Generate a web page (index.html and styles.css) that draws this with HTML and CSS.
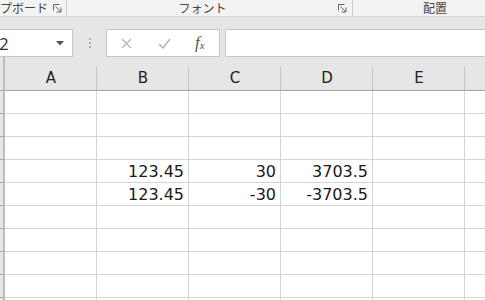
FILE: index.html
```html
<!DOCTYPE html>
<html lang="ja">
<head>
    <meta charset="UTF-8">
    <meta name="viewport" content="width=device-width, initial-scale=1.0">
    <title>Sheet</title>
    <link rel="stylesheet" href="styles.css">
</head>
<body>
    <!-- リボンのグループ名 -->
    <div class="ribbon">
        <div class="group g-clip">
            <span class="label">プボード</span>
            <svg class="launcher" width="9" height="9" viewBox="0 0 9 9"><path d="M0.5 6.5V0.5h6" fill="none" stroke="#666"/><path d="M2.5 2.5l5 5M8 3.5v4.5H3.5" fill="none" stroke="#666"/></svg>
        </div>
        <div class="group g-font">
            <span class="label">フォント</span>
            <svg class="launcher" width="9" height="9" viewBox="0 0 9 9"><path d="M0.5 6.5V0.5h6" fill="none" stroke="#666"/><path d="M2.5 2.5l5 5M8 3.5v4.5H3.5" fill="none" stroke="#666"/></svg>
        </div>
        <div class="group g-align">
            <span class="label">配置</span>
        </div>
    </div>

    <!-- 数式バー -->
    <div class="formula-bar">
        <div class="name-box">
            <span class="cell-ref">2</span>
            <svg width="8" height="5" viewBox="0 0 8 5"><path d="M0 0h8L4 4.5z" fill="#555"/></svg>
        </div>
        <div class="dots"><span></span><span></span><span></span></div>
        <div class="fx-buttons">
            <svg class="btn-cancel" width="11" height="11" viewBox="0 0 11 11"><path d="M1 1l9 9M10 1l-9 9" stroke="#b4b4b4" stroke-width="1.3"/></svg>
            <svg class="btn-ok" width="13" height="11" viewBox="0 0 13 11"><path d="M1 6l4 4 7-9" fill="none" stroke="#b4b4b4" stroke-width="1.5"/></svg>
            <span class="fx"><i>f</i><sub>x</sub></span>
        </div>
        <div class="formula-input"></div>
    </div>

    <!-- シート -->
    <div class="sheet">
        <div class="corner"></div>
        <div class="col-head">A</div>
        <div class="col-head">B</div>
        <div class="col-head">C</div>
        <div class="col-head">D</div>
        <div class="col-head">E</div>
        <div class="col-head"></div>

        <div class="row-head"></div><div class="cell"></div><div class="cell"></div><div class="cell"></div><div class="cell"></div><div class="cell"></div><div class="cell"></div>
        <div class="row-head"></div><div class="cell"></div><div class="cell"></div><div class="cell"></div><div class="cell"></div><div class="cell"></div><div class="cell"></div>
        <div class="row-head"></div><div class="cell"></div><div class="cell"></div><div class="cell"></div><div class="cell"></div><div class="cell"></div><div class="cell"></div>
        <div class="row-head"></div><div class="cell"></div><div class="cell num">123.45</div><div class="cell num">30</div><div class="cell num">3703.5</div><div class="cell"></div><div class="cell"></div>
        <div class="row-head"></div><div class="cell"></div><div class="cell num">123.45</div><div class="cell num">-30</div><div class="cell num">-3703.5</div><div class="cell"></div><div class="cell"></div>
        <div class="row-head"></div><div class="cell"></div><div class="cell"></div><div class="cell"></div><div class="cell"></div><div class="cell"></div><div class="cell"></div>
        <div class="row-head"></div><div class="cell"></div><div class="cell"></div><div class="cell"></div><div class="cell"></div><div class="cell"></div><div class="cell"></div>
        <div class="row-head"></div><div class="cell"></div><div class="cell"></div><div class="cell"></div><div class="cell"></div><div class="cell"></div><div class="cell"></div>
        <div class="row-head"></div><div class="cell"></div><div class="cell"></div><div class="cell"></div><div class="cell"></div><div class="cell"></div><div class="cell"></div>
        <div class="row-head"></div><div class="cell"></div><div class="cell"></div><div class="cell"></div><div class="cell"></div><div class="cell"></div><div class="cell"></div>
    </div>
</body>
</html>
```

FILE: styles.css
```css
body {
    margin: 0;
    width: 485px;
    height: 300px;
    overflow: hidden;
    background: #fff;
    font-family: "DejaVu Sans", "Noto Sans CJK JP", sans-serif;
}
.ribbon {
    display: flex;
    height: 16px;
    background: #f3f3f3;
    border-bottom: 1px solid #d5d5d5;
}
.group {
    display: flex;
    align-items: center;
    box-sizing: border-box;
    border-right: 1px solid #cbcbcb;
}
.label {
    font-family: "Noto Sans CJK JP", sans-serif;
    font-size: 12px;
    line-height: 14px;
    color: #444;
    white-space: nowrap;
}
.g-clip {
    width: 67px;
    justify-content: space-between;
    padding-right: 4px;
}
.g-font {
    width: 286px;
    padding-right: 5px;
}
.g-font .label {
    flex: 1;
    text-align: center;
}
.g-align {
    flex: 1;
    border-right: none;
    padding-left: 70px;
}
.launcher {
    display: block;
}

.formula-bar {
    display: flex;
    align-items: stretch;
    height: 28px;
    padding-top: 12px;
    background: #e6e6e6;
}
.name-box {
    box-sizing: border-box;
    width: 74px;
    margin-left: -1px;
    display: flex;
    align-items: center;
    justify-content: space-between;
    padding-right: 8px;
    background: #fff;
    border: 1px solid #c6c6c6;
}
.cell-ref {
    font-family: "Open Sans", sans-serif;
    font-size: 17px;
    color: #333;
    margin-left: -1px;
}
.dots {
    width: 33px;
    display: flex;
    flex-direction: column;
    align-items: center;
    justify-content: center;
    gap: 2px;
}
.dots span {
    width: 2px;
    height: 2px;
    background: #b0b0b0;
}
.fx-buttons {
    box-sizing: border-box;
    width: 114px;
    display: flex;
    align-items: center;
    padding-left: 14px;
    background: #fff;
    border: 1px solid #c6c6c6;
}
.btn-ok {
    margin-left: 26px;
}
.fx {
    margin-left: 24px;
    font-family: "Liberation Serif", serif;
    font-size: 17px;
    color: #555;
}
.fx sub {
    font-size: 11px;
    font-style: italic;
    vertical-align: -1px;
}
.formula-input {
    flex: 1;
    margin-left: 5px;
    margin-right: -2px;
    background: #fff;
    border: 1px solid #c6c6c6;
}

.sheet {
    display: grid;
    grid-template-columns: 5px repeat(6, 92px);
    grid-template-rows: 34px;
    grid-auto-rows: 23px;
}
.corner,
.col-head {
    box-sizing: border-box;
    background: #e6e6e6;
    border-bottom: 1px solid #a3a3a3;
}
.corner {
    border-right: 2px solid #bdbdbd;
}
.col-head {
    display: flex;
    align-items: flex-end;
    justify-content: center;
    padding-bottom: 3px;
    font-size: 15px;
    line-height: 18px;
    color: #222;
    background: #e6e6e6 linear-gradient(#c3c3c3, #c3c3c3) right bottom / 1px 23px no-repeat;
}
.row-head {
    box-sizing: border-box;
    background: #e6e6e6;
    border-right: 2px solid #bdbdbd;
    border-bottom: 1px solid #ababab;
}
.cell {
    box-sizing: border-box;
    border-right: 1px solid #d4d4d4;
    border-bottom: 1px solid #d4d4d4;
}
.num {
    display: flex;
    align-items: flex-end;
    justify-content: flex-end;
    padding: 0 4px 1px 0;
    font-size: 16px;
    line-height: 18px;
    color: #1a1a1a;
}
```
